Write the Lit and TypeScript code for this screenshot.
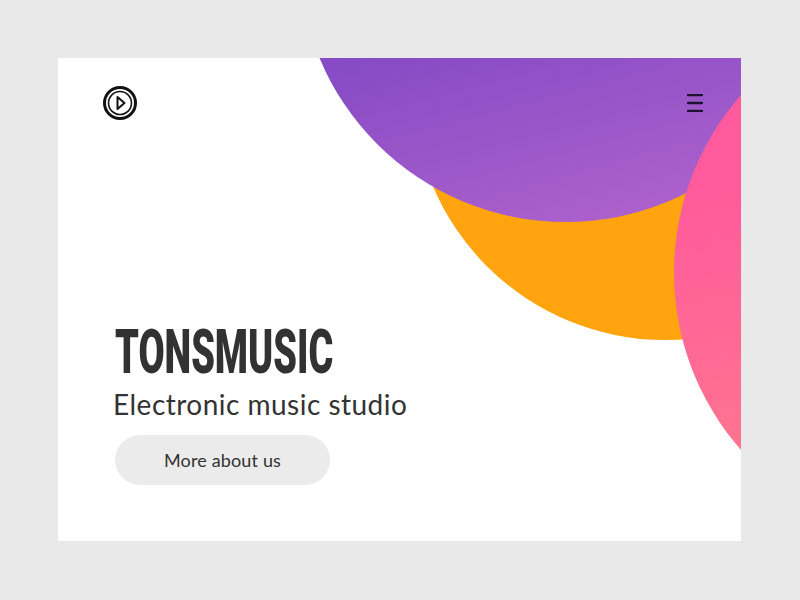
import { LitElement, html, css } from "lit";
import { customElement } from "lit/decorators.js";

@customElement("app-root")
export class AppRoot extends LitElement {
  static styles = css`
    :host {
      display: block;
      box-sizing: border-box;
      width: 800px;
      height: 600px;
      padding: 58px;
      background: #e9e9e9;
    }

    .card {
      position: relative;
      overflow: hidden;
      display: flex;
      flex-direction: column;
      justify-content: space-between;
      box-sizing: border-box;
      width: 683px;
      height: 483px;
      padding: 28px 38px 56px 45px;
      background: #fff;
    }

    /* the circles are free shapes bleeding off the card */
    .circle {
      position: absolute;
      border-radius: 50%;
    }
    .orange {
      left: 355px;
      top: -222px;
      width: 504px;
      height: 504px;
      background: #ffa40e;
    }
    .purple {
      left: 241px;
      top: -369px;
      width: 533px;
      height: 533px;
      background: linear-gradient(165deg, #854ac4 56%, #ab60cc 90%);
    }
    .pink {
      left: 616px;
      top: -54px;
      width: 537px;
      height: 537px;
      background: linear-gradient(170deg, #ff5a9c 30%, #ff7290 70%);
    }

    .top {
      position: relative;
      display: flex;
      justify-content: space-between;
      align-items: center;
    }
    .logo {
      display: block;
      width: 34px;
      height: 34px;
    }
    .menu {
      display: block;
      width: 16px;
      height: 18px;
    }

    .hero {
      position: relative;
      display: flex;
      flex-direction: column;
      align-items: flex-start;
      padding-left: 12px;
    }
    h1 {
      margin: 0;
      font: 900 62px/62px Roboto, sans-serif;
      color: #323232;
      white-space: nowrap;
      transform: scaleX(0.611);
      transform-origin: left center;
    }
    p {
      margin: 3px 0 13px -2px;
      font: 400 28px/36px Lato, sans-serif;
      letter-spacing: 0.48px;
      color: #333;
      white-space: nowrap;
    }
    button {
      width: 215px;
      height: 50px;
      border: none;
      border-radius: 25px;
      background: #ebebeb;
      font: 400 18px Lato, sans-serif;
      letter-spacing: 0.15px;
      color: #333;
    }
  `;

  render() {
    return html`
      <div class="card">
        <div class="circle orange"></div>
        <div class="circle purple"></div>
        <div class="circle pink"></div>
        <div class="top">
          <svg class="logo" viewBox="0 0 34 34" fill="none" stroke="#111">
            <circle cx="17" cy="17" r="15.5" stroke-width="3" />
            <circle cx="17" cy="17" r="11.5" stroke-width="1.6" />
            <path d="M14.5 11 L21.5 17 L14.5 23 Z" stroke-width="2" stroke-linejoin="round" />
          </svg>
          <svg class="menu" viewBox="0 0 16 18" fill="none" stroke="#1c1430" stroke-width="2.4" stroke-linecap="round">
            <path d="M1 1H15M1 9H15M1 17H15" />
          </svg>
        </div>
        <div class="hero">
          <h1>TONSMUSIC</h1>
          <p>Electronic music studio</p>
          <button>More about us</button>
        </div>
      </div>
    `;
  }
}
